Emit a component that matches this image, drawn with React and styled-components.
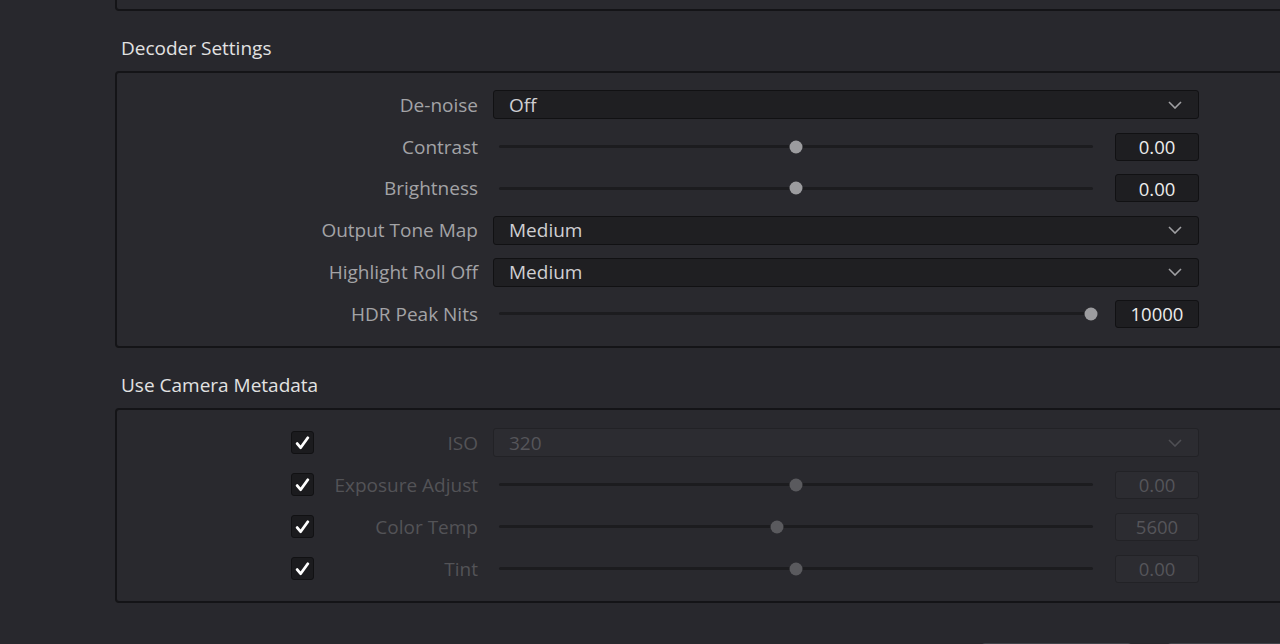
import React from "react";
import styled, { createGlobalStyle, css } from "styled-components";

const Global = createGlobalStyle`
  html, body {
    margin: 0;
    padding: 0;
    background: #28282d;
    overflow: hidden;
  }
  body {
    font-family: "Open Sans", "Noto Sans", sans-serif;
    -webkit-font-smoothing: antialiased;
  }
`;

const Page = styled.div`
  width: 1280px;
  height: 644px;
  padding-left: 115px;
  box-sizing: border-box;
  overflow: hidden;
  display: flex;
  flex-direction: column;

  & > * {
    flex: none;
  }
`;

const Panel = styled.div`
  width: 1220px;
  box-sizing: border-box;
  border: 2px solid #141417;
  border-radius: 4px;
  background: #29292e;
  display: flex;
  flex-direction: column;
  padding: ${(p) => p.$pad || "10px 0"};
`;

const TopPanel = styled(Panel)`
  height: 11px;
  border-top: none;
  border-radius: 0 0 4px 4px;
  padding: 0;
`;

const SectionTitle = styled.div`
  font-size: 19px;
  line-height: 26px;
  color: #e2e2e2;
  padding: 24px 0 10px 6px;
`;

const Row = styled.div`
  display: grid;
  grid-template-columns: 361px 706px;
  column-gap: 15px;
  align-items: center;
  height: ${(p) => p.$h || 42}px;
`;

const LabelCell = styled.div`
  display: flex;
  align-items: center;
  justify-content: flex-end;
`;

const Label = styled.span`
  font-size: 19px;
  color: ${(p) => (p.$disabled ? "#535357" : "#a3a3a6")};
  white-space: nowrap;
  margin-left: auto;
`;

const Check = styled.div`
  width: 23px;
  height: 23px;
  box-sizing: border-box;
  border: 1px solid #111113;
  border-radius: 3px;
  background: #1b1b1e;
  margin-left: 174px;
  display: flex;
  align-items: center;
  justify-content: center;
`;

const Select = styled.div`
  height: 29px;
  box-sizing: border-box;
  border: 1px solid #111113;
  border-radius: 3px;
  background: ${(p) => (p.$disabled ? "#2c2c31" : "#1f1f22")};
  display: flex;
  align-items: center;
  justify-content: space-between;
  padding: 0 16px 0 15px;
  font-size: 19px;
  color: ${(p) => (p.$disabled ? "#55555a" : "#cfcfd2")};
  ${(p) =>
    p.$disabled &&
    css`
      border-color: #222226;
    `}
`;

const SliderLine = styled.div`
  display: flex;
  align-items: center;
  gap: 22px;
`;

const Track = styled.div`
  position: relative;
  flex: 1;
  height: 3px;
  margin-left: 6px;
  border-radius: 2px;
  background: #1c1c1f;
`;

const Thumb = styled.div`
  position: absolute;
  top: 50%;
  width: 13px;
  height: 13px;
  border-radius: 50%;
  transform: translate(-50%, -50%);
  background: ${(p) => (p.$disabled ? "#5a5a5e" : "#9c9c9f")};
`;

const Value = styled.div`
  width: 84px;
  height: 28px;
  box-sizing: border-box;
  border: 1px solid ${(p) => (p.$disabled ? "#222226" : "#111113")};
  border-radius: 3px;
  background: ${(p) => (p.$disabled ? "#2c2c31" : "#1e1e21")};
  display: flex;
  align-items: center;
  justify-content: center;
  font-size: 18.5px;
  color: ${(p) => (p.$disabled ? "#55555a" : "#ececec")};
`;

const Buttons = styled.div`
  display: flex;
  gap: 33px;
  margin-top: 40px;
  padding-left: 865px;
`;

const Button = styled.div`
  flex: none;
  width: ${(p) => p.$w}px;
  height: 30px;
  box-sizing: border-box;
  border: 1px solid #41444a;
  border-radius: 5px;
  background: #2b2c31;
`;

const Chevron = ({ color }) => (
  <svg width="14" height="8" viewBox="0 0 14 8">
    <path d="M1 1l6 6 6-6" fill="none" stroke={color} strokeWidth="1.6" />
  </svg>
);

const Tick = () => (
  <svg width="15" height="14" viewBox="0 0 15 14">
    <path
      d="M2.2 7.6l3.4 4.1L12.8 1.8"
      fill="none"
      stroke="#ffffff"
      strokeWidth="2.8"
      strokeLinecap="round"
      strokeLinejoin="round"
    />
  </svg>
);

const SelectControl = ({ value, disabled }) => (
  <Select $disabled={disabled}>
    <span>{value}</span>
    <Chevron color={disabled ? "#4f4f54" : "#a0a0a3"} />
  </Select>
);

const SliderControl = ({ pct, value, disabled }) => (
  <SliderLine>
    <Track>
      <Thumb $disabled={disabled} style={{ left: `${pct * 100}%` }} />
    </Track>
    <Value $disabled={disabled}>{value}</Value>
  </SliderLine>
);

const decoder = [
  { label: "De-noise", kind: "select", value: "Off" },
  { label: "Contrast", kind: "slider", value: "0.00", pct: 0.5 },
  { label: "Brightness", kind: "slider", value: "0.00", pct: 0.5 },
  { label: "Output Tone Map", kind: "select", value: "Medium" },
  { label: "Highlight Roll Off", kind: "select", value: "Medium" },
  { label: "HDR Peak Nits", kind: "slider", value: "10000", pct: 0.997 },
];

const metadata = [
  { label: "ISO", kind: "select", value: "320" },
  { label: "Exposure Adjust", kind: "slider", value: "0.00", pct: 0.5 },
  { label: "Color Temp", kind: "slider", value: "5600", pct: 0.468 },
  { label: "Tint", kind: "slider", value: "0.00", pct: 0.5 },
];

const Control = ({ item, disabled }) =>
  item.kind === "select" ? (
    <SelectControl value={item.value} disabled={disabled} />
  ) : (
    <SliderControl pct={item.pct} value={item.value} disabled={disabled} />
  );

export default function App() {
  return (
    <>
      <Global />
      <Page>
        <TopPanel />
        <SectionTitle>Decoder Settings</SectionTitle>
        <Panel $pad="11px 0 11px">
          {decoder.map((item) => (
            <Row key={item.label} $h={41.8}>
              <LabelCell>
                <Label>{item.label}</Label>
              </LabelCell>
              <Control item={item} />
            </Row>
          ))}
        </Panel>
        <SectionTitle>Use Camera Metadata</SectionTitle>
        <Panel $pad="12px 0 11px">
          {metadata.map((item) => (
            <Row key={item.label}>
              <LabelCell>
                <Check>
                  <Tick />
                </Check>
                <Label $disabled>{item.label}</Label>
              </LabelCell>
              <Control item={item} disabled />
            </Row>
          ))}
        </Panel>
        <Buttons>
          <Button $w={153} />
          <Button $w={160} />
        </Buttons>
      </Page>
    </>
  );
}
